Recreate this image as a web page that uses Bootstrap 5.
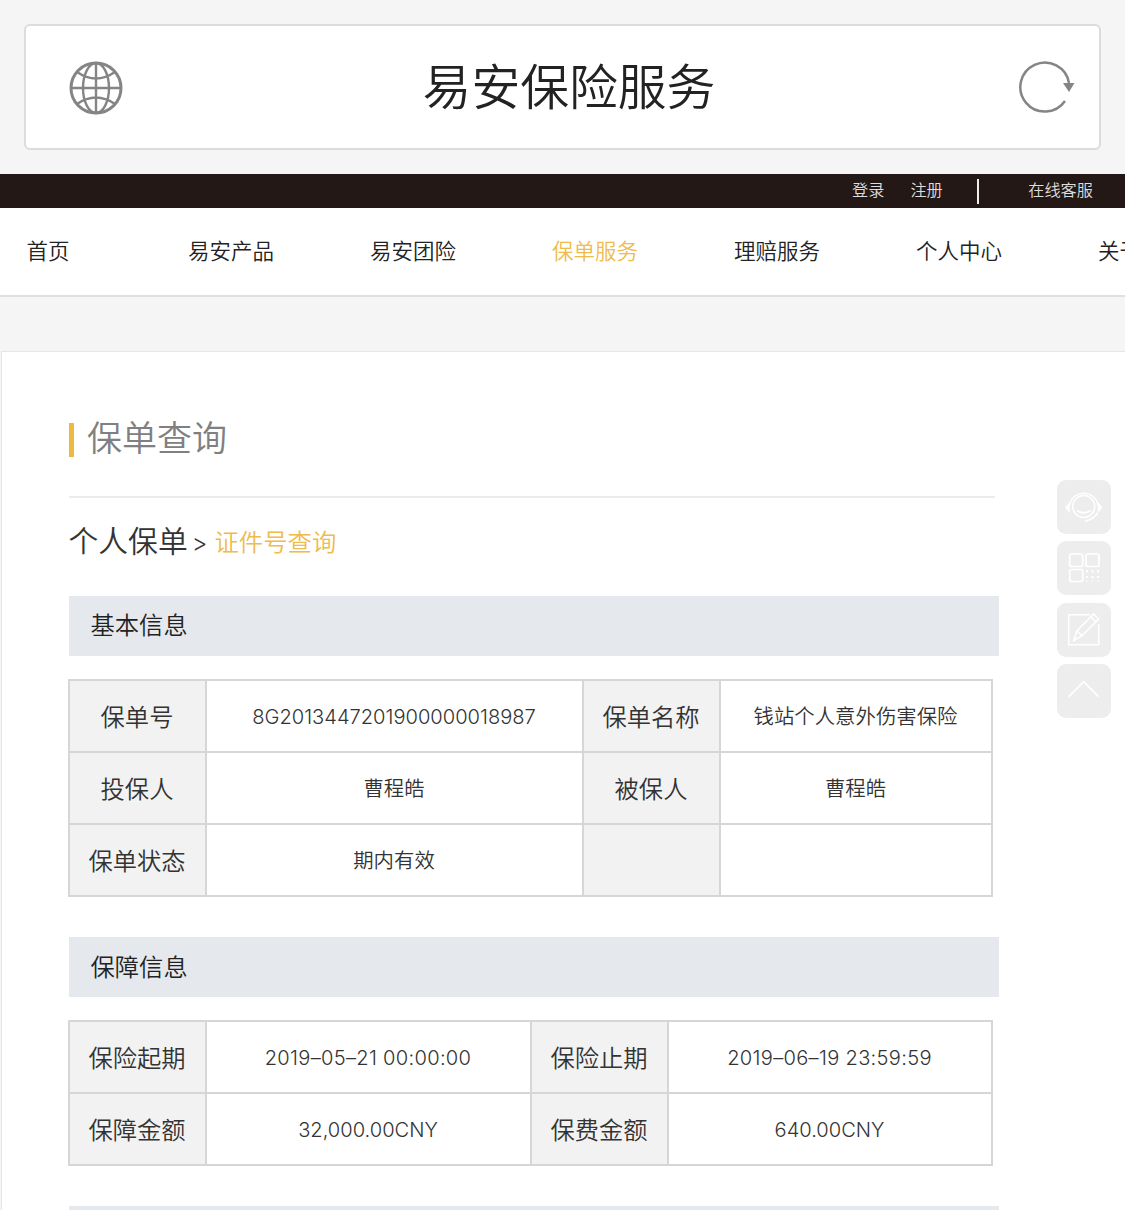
<!DOCTYPE html>
<html lang="zh-CN">
<head>
<meta charset="utf-8">
<title>易安保险服务</title>
<link rel="stylesheet" href="https://cdn.jsdelivr.net/npm/bootstrap@5.3.0/dist/css/bootstrap.min.css">
<style>
html,body{margin:0;background:#f5f5f5;}
body{font-family:"Inter","Noto Sans CJK SC",sans-serif;font-weight:350;color:#333;}
.pageclip{position:relative;height:1210px;width:1125px;overflow:hidden;}
.hdrbox{margin:24px 24px 0 24px;width:1077px;height:126px;background:#fff;border:2px solid #dcdcdc;border-radius:6px;padding:0 24px 0 43px;}
.hdrbox svg{margin-top:2px;}
.hdrtitle{font-size:48.800px;font-weight:350;color:#222;line-height:1;margin-top:3px;margin-left:-4px;}
.topbar{margin-top:24px;height:34px;background:#231815;color:#ddd;font-size:16.200px;padding-right:32px;padding-bottom:2px;}
.topbar .sep{width:1.500px;height:25px;background:#eee;margin:2px 49.500px 0 34.500px;}
.topbar .gapper{margin-right:26px;}
.mainnav{height:88.500px;background:#fff;border-bottom:2px solid #e0e0e0;padding-left:26.500px;white-space:nowrap;overflow:hidden;font-size:21.500px;color:#222;}
.navcell{flex:0 0 182px;}
.navcell.firstcell{flex-basis:161.500px;}
.navcell.current{color:#eebb4d;}
.panel{margin:54.500px 0 0 1px;background:#fff;border-top:1px solid #e6e6e6;border-left:1px solid #e6e6e6;padding:68px 0 0 66.500px;height:900px;}
.pagehead{height:40px;font-size:35px;color:#808080;line-height:36px;}
.pagehead .tick{width:5.500px;height:34px;background:#eeb93f;margin-right:13px;}
.pagehead .headtext{margin-bottom:4px;}
.rulehr{width:926px;height:2px;background:#ececec;margin-top:36px;}
.crumbs{margin-top:22px;height:42px;line-height:42px;color:#333;}
.crumbs .c1{font-size:29.800px;}
.crumbs .c2{font-size:24px;margin:0 7px 0 4px;color:#333;}
.crumbs .c3{font-size:24.400px;color:#eebb4d;position:relative;top:-1px;}
.secbar{width:930.500px;height:60px;background:#e5e9ee;font-size:24.300px;color:#222;padding-left:22px;line-height:58px;}
.bar1{margin-top:34px;}
.datatable{border-collapse:collapse;table-layout:fixed;margin:23px 0 0 -1px;color:#333;}
.datatable td{border:2px solid #d6d6d6;height:72px;text-align:center;vertical-align:middle;padding:2px 0 0;font-size:20.400px;}
.datatable td.lbl{background:#f2f2f2;font-size:24.300px;color:#333;}
.datatable td.numval{font-size:20.100px;}
.datatable td.dateval{letter-spacing:.3px;}
.bar2{margin-top:40px;line-height:60px;}
.bar3{margin-top:40px;}
.floatbox{position:absolute;left:1056.500px;top:480px;}
.floatbtn{width:54px;height:54px;background:#ededed;border-radius:9px;margin-bottom:7.300px;}
.floatbtn svg{display:block;}
</style>
</head>
<body>
<div class="pageclip">
  <div class="hdrbox d-flex align-items-center justify-content-between">
    <svg width="54" height="54" viewBox="0 0 54 54" fill="none" stroke="#858585" stroke-width="2.400">
      <circle cx="27" cy="27" r="25" stroke-width="3"/>
      <ellipse cx="27" cy="27" rx="13" ry="25"/>
      <path d="M27 2V52M2 27H52M8 11Q27 24 46 11M8 43Q27 30 46 43"/>
    </svg>
    <div class="hdrtitle">易安保险服务</div>
    <svg width="56" height="54" viewBox="0 0 56 54" fill="none">
      <path d="M46 40A24.500 24.500 0 1 1 50 22" stroke="#858585" stroke-width="2.500"/>
      <path d="M44 22H55.500L50 31Z" fill="#858585"/>
    </svg>
  </div>
  <div class="topbar d-flex align-items-center justify-content-end">
    <span class="gapper">登录</span><span>注册</span><span class="sep"></span><span>在线客服</span>
  </div>
  <nav class="mainnav d-flex align-items-center">
    <div class="navcell firstcell">首页</div>
    <div class="navcell">易安产品</div>
    <div class="navcell">易安团险</div>
    <div class="navcell current">保单服务</div>
    <div class="navcell">理赔服务</div>
    <div class="navcell">个人中心</div>
    <div class="navcell">关于易安</div>
  </nav>
  <main class="panel">
    <div class="pagehead d-flex align-items-center"><span class="tick"></span><span class="headtext">保单查询</span></div>
    <div class="rulehr"></div>
    <div class="crumbs"><span class="c1">个人保单</span><span class="c2">&gt;</span><span class="c3">证件号查询</span></div>
    <div class="secbar bar1">基本信息</div>
    <table class="datatable">
      <colgroup><col style="width:137px"><col style="width:377px"><col style="width:137px"><col style="width:272px"></colgroup>
      <tr><td class="lbl">保单号</td><td class="numval">8G2013447201900000018987</td><td class="lbl">保单名称</td><td>钱站个人意外伤害保险</td></tr>
      <tr><td class="lbl">投保人</td><td>曹程皓</td><td class="lbl">被保人</td><td>曹程皓</td></tr>
      <tr><td class="lbl">保单状态</td><td>期内有效</td><td class="lbl"></td><td></td></tr>
    </table>
    <div class="secbar bar2">保障信息</div>
    <table class="datatable">
      <colgroup><col style="width:137px"><col style="width:325px"><col style="width:137px"><col style="width:324px"></colgroup>
      <tr><td class="lbl">保险起期</td><td class="numval dateval">2019–05–21 00:00:00</td><td class="lbl">保险止期</td><td class="numval dateval">2019–06–19 23:59:59</td></tr>
      <tr><td class="lbl">保障金额</td><td class="numval">32,000.00CNY</td><td class="lbl">保费金额</td><td class="numval">640.00CNY</td></tr>
    </table>
    <div class="secbar bar3"></div>
  </main>
  <div class="floatbox">
    <div class="floatbtn">
      <svg width="54" height="54" viewBox="0 0 54 54" fill="none" stroke="#fff" stroke-width="1.500" stroke-linecap="round">
        <circle cx="26.700" cy="26.500" r="11"/>
        <path d="M12.500 25A14.500 14.500 0 0 1 41 25" stroke-width="1.500"/>
        <path d="M20.500 31Q26.700 34.500 33 31" stroke-width="1.800"/>
        <path d="M12 24 9 27.500 12 31ZM41.500 24 44.500 27.500 41.500 31Z" fill="#fff"/>
        <path d="M40.500 33Q37 39 28.500 41"/>
      </svg>
    </div>
    <div class="floatbtn">
      <svg width="54" height="54" viewBox="0 0 54 54" fill="none" stroke="#fff" stroke-width="1.700">
        <rect x="12.700" y="13" width="13" height="12.500" rx="2"/>
        <rect x="29" y="13" width="13" height="12.500" rx="2"/>
        <rect x="12.700" y="28.500" width="13" height="12" rx="2"/>
        <path d="M30 29v2.500M35.500 29v2.500M41 29v2.500M30 35v2M35.500 35v2M41 35v2M30 39.500v1M35.500 39.500v1M41 39.500v1" stroke-width="2"/>
      </svg>
    </div>
    <div class="floatbtn">
      <svg width="54" height="54" viewBox="0 0 54 54" fill="none" stroke="#fff" stroke-width="1.600">
        <path d="M33 11.700H11.700V41.700H41.700V21"/>
        <path d="M16.700 37.700 20 27.700 36.700 11 41.700 16 25 32.700ZM20 27.700 25 32.700M34 14 39 19"/>
      </svg>
    </div>
    <div class="floatbtn">
      <svg width="54" height="54" viewBox="0 0 54 54" fill="none" stroke="#fff" stroke-width="1.800">
        <path d="M11.700 32.700 26.700 17.700 41.700 32.700"/>
      </svg>
    </div>
  </div>
</div>
<script src="https://cdn.jsdelivr.net/npm/bootstrap@5.3.0/dist/js/bootstrap.bundle.min.js"></script>
</body>
</html>
